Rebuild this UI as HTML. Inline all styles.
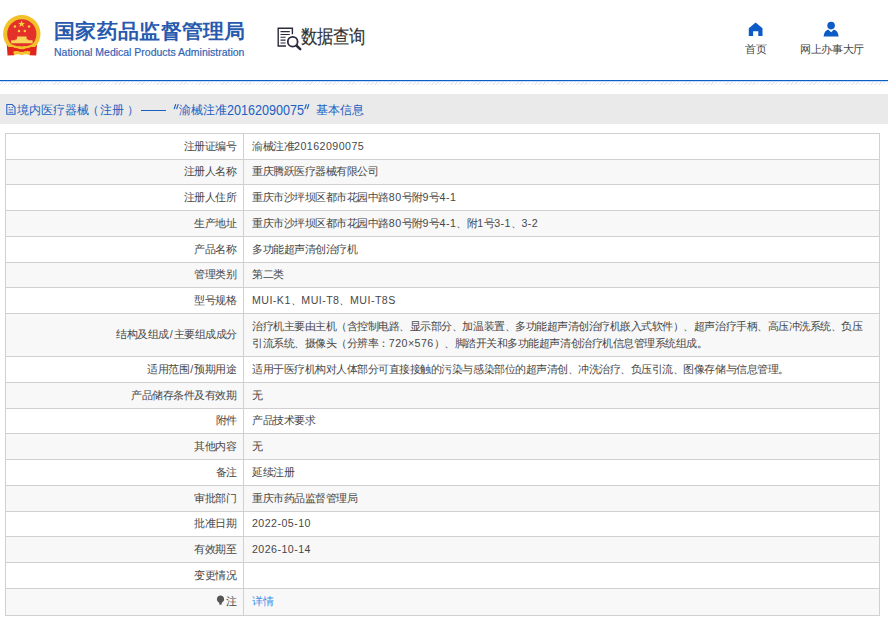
<!DOCTYPE html>
<html><head><meta charset="utf-8">
<style>
html,body{margin:0;padding:0;background:#fff;overflow:hidden;width:888px;height:618px;position:relative}
body{font-family:"Liberation Sans",sans-serif;}
.a{position:absolute}
.t{font-size:12px;line-height:16px;white-space:nowrap;color:#474747;transform:scale(0.888);transform-origin:0 0}
.tr{transform-origin:100% 0}
.hl{left:5px;width:875px;height:1px;background:#d1cfd1}
.vl{top:133px;width:1px;height:483px;background:#d1cfd1}
.tb{letter-spacing:-0.15px}
.lat{letter-spacing:0.5px}
.sl{letter-spacing:1.2px;padding-left:1px}
.bcc{font-size:13px;letter-spacing:0.5px;color:#1b5fc1!important}
</style></head><body>
<!-- emblem -->
<svg class="a" style="left:0;top:12px" width="44" height="46" viewBox="0 12 44 46">
  <defs><clipPath id="cp"><rect x="0" y="0" width="44" height="47"/></clipPath></defs>
  <path d="M6.8 44.5 L37 44.5 L36.2 55.6 L29.6 55.3 L27.6 52 H16 L14 55.3 L7.5 55.6 Z" fill="#e1251b"/>
  <circle cx="21.8" cy="33.8" r="18.7" fill="#f3c129" clip-path="url(#cp)"/>
  <circle cx="21.8" cy="33.9" r="14.6" fill="#e4302a"/>
  <path d="M21.6 20.6 L22.6 23.0 L25.0 23.0 L23.1 24.5 L23.8 26.9 L21.6 25.5 L19.4 26.9 L20.1 24.5 L18.2 23.0 L20.6 23.0 Z" fill="#f6cf40"/>
  <circle cx="14.9" cy="26.5" r="1.25" fill="#f6cf40"/><circle cx="29" cy="26.5" r="1.25" fill="#f6cf40"/>
  <circle cx="19" cy="31" r="1.25" fill="#f6cf40"/><circle cx="24.8" cy="31" r="1.25" fill="#f6cf40"/>
  <path d="M17 36.6 H26.6 V39.4 H17 Z M15.5 39.2 H28.2 V40.3 H15.5Z M11.2 40.3 H32.6 V43.3 H11.2 Z" fill="#f7d65c"/>
  <path d="M9 43.6 Q21.8 49.5 34.6 43.6 L35.6 45.6 Q21.8 52 8 45.6 Z" fill="#f3c129"/>
  <path d="M10.5 47 Q21.8 51.5 33.1 47 V52 H10.5 Z" fill="#e1251b"/>
  <path d="M17 47.3 Q19.5 45.3 21.8 47.5 Q24.1 45.3 26.6 47.3 Q24.5 50.1 21.8 49.1 Q19.1 50.1 17 47.3Z" fill="#f3c129"/>
  <path d="M13.2 51.4 Q17 50.2 21.8 52.4 Q26.6 50.2 30.4 51.4 L29.6 55 Q25 53.6 21.8 55.3 Q18.6 53.6 14 55 Z" fill="#f3c129"/>
</svg>
<div class="a t" id="title" style="left:54px;top:18px;font-size:24px;line-height:30px;font-weight:bold;color:#2759ae;transform:scale(0.888,0.85)">国家药品监督管理局</div>
<div class="a t" style="left:54px;top:45.8px;font-size:11.8px;line-height:14px;color:#2f62b4;transform:scale(0.888,0.88);-webkit-text-stroke:0.2px #2f62b4">National Medical Products Administration</div>
<!-- data query icon -->
<svg class="a" style="left:270px;top:20px" width="40" height="36" viewBox="270 20 40 36">
  <path d="M292.4 34.3 V28.2 H278.2 V46.0 H286" fill="none" stroke="#2b2b3c" stroke-width="1.4"/>
  <path d="M280.5 31.6H289.8M280.5 34.4H289.8M280.5 37.3H285.6M280.5 40.1H285.6M280.5 42.9H285.6" stroke="#2b2b3c" stroke-width="1.05" fill="none"/>
  <circle cx="292.7" cy="41.7" r="4.9" fill="none" stroke="#2b2b3c" stroke-width="1.8"/>
  <path d="M296.4 45.5 L300.2 49.1" stroke="#2b2b3c" stroke-width="2.5" stroke-linecap="round"/>
</svg>
<div class="a t" id="sq" style="left:301px;top:24px;font-size:18px;line-height:24px;color:#2e2e2e;-webkit-text-stroke:0.15px #2e2e2e;transform:scale(0.888,1.03)">数据查询</div>
<!-- home -->
<svg class="a" style="left:740px;top:18px" width="30" height="22" viewBox="740 18 30 22">
  <path d="M748.8 28.3 L755.65 22.5 L762.5 28.3 V35.9 H758.3 V31.2 H753.1 V35.9 H748.8 Z" fill="#0d5bc6"/>
</svg>
<div class="a t" id="shouye" style="left:744.5px;top:42px;color:#444">首页</div>
<!-- person -->
<svg class="a" style="left:815px;top:15px" width="30" height="25" viewBox="815 15 30 25">
  <circle cx="831.1" cy="25.6" r="3.8" fill="#0d5bc6"/>
  <path d="M823.6 36.6 Q824.2 30.8 828.2 29.6 L831.1 32.2 L834 29.6 Q838 30.8 838.6 36.6 Z" fill="#0d5bc6"/>
</svg>
<div class="a t" id="wang" style="left:800px;top:42px;color:#444">网上办事大厅</div>
<!-- blue line + stripes -->
<div class="a" style="left:0;top:80px;width:888px;height:1px;background:#0a5ec6"></div>
<div class="a" style="left:0;top:81px;width:888px;height:1px;background:#c9dcf3"></div>
<div class="a" style="left:0;top:82px;width:888px;height:3px;background:repeating-linear-gradient(135deg,#fff 0,#fff 1.7px,#e9e9e9 1.6px,#e9e9e9 2.7px)"></div>
<!-- breadcrumb -->
<div class="a" style="left:0;top:94px;width:888px;height:30px;background:#eaeaea"></div>
<svg class="a" style="left:0;top:100px" width="20" height="18" viewBox="0 100 20 18">
  <path d="M6.8 104.5 H12.2 L15 107.3 V114.3 H6.8 Z" fill="none" stroke="#2d62c6" stroke-width="1.1"/>
  <path d="M8.6 107.5H10.2M11.6 107.5H13.1M8.6 109.8H13.1M8.6 112.3H13.1" stroke="#4a72c8" stroke-width="1"/>
</svg>
<div class="a" id="bc" style="left:0;top:0;color:#1b5fc1">
  <div class="a t bcc" style="left:16.5px;top:102.5px">境内医疗器械</div>
  <div class="a t bcc" style="left:87px;top:102.5px">（</div>
  <div class="a t bcc" style="left:99.8px;top:102.5px">注册</div>
  <div class="a t bcc" style="left:127.3px;top:102.5px">）</div>
  <div class="a" style="left:140.8px;top:110px;width:25px;height:1px;background:#1b5fc1"></div>
  <svg class="a" style="left:170px;top:102px" width="12" height="10" viewBox="170 102 12 10"><path d="M175.6 104.6 L174.3 108.6 M178.1 104.6 L176.8 108.6" stroke="#1b5fc1" stroke-width="1.2" stroke-linecap="round"/></svg>
  <div class="a t bcc" style="left:178.5px;top:102.5px">渝械注准</div>
  <div class="a t" style="left:227px;top:102px;font-size:14.2px;line-height:16px;color:#1b5fc1;transform:scale(0.888,1)">20162090075</div>
  <svg class="a" style="left:302px;top:102px" width="10" height="10" viewBox="302 102 10 10"><path d="M306.2 104.6 L304.9 108.6 M308.7 104.6 L307.4 108.6" stroke="#1b5fc1" stroke-width="1.2" stroke-linecap="round"/></svg>
  <div class="a t bcc" style="left:316px;top:102.5px">基本信息</div>
</div>
<!-- table -->
<div class="a" style="left:5px;top:133px;width:874px;height:26px;background:#ffffff"></div>
<div class="a" style="left:5px;top:159px;width:874px;height:25px;background:#f8f8f8"></div>
<div class="a" style="left:5px;top:184px;width:874px;height:26px;background:#ffffff"></div>
<div class="a" style="left:5px;top:210px;width:874px;height:26px;background:#f8f8f8"></div>
<div class="a" style="left:5px;top:236px;width:874px;height:26px;background:#ffffff"></div>
<div class="a" style="left:5px;top:262px;width:874px;height:25px;background:#f8f8f8"></div>
<div class="a" style="left:5px;top:287px;width:874px;height:26px;background:#ffffff"></div>
<div class="a" style="left:5px;top:313px;width:874px;height:43px;background:#f8f8f8"></div>
<div class="a" style="left:5px;top:356px;width:874px;height:26px;background:#ffffff"></div>
<div class="a" style="left:5px;top:382px;width:874px;height:26px;background:#f8f8f8"></div>
<div class="a" style="left:5px;top:408px;width:874px;height:25px;background:#ffffff"></div>
<div class="a" style="left:5px;top:433px;width:874px;height:26px;background:#f8f8f8"></div>
<div class="a" style="left:5px;top:459px;width:874px;height:26px;background:#ffffff"></div>
<div class="a" style="left:5px;top:485px;width:874px;height:26px;background:#f8f8f8"></div>
<div class="a" style="left:5px;top:511px;width:874px;height:25px;background:#ffffff"></div>
<div class="a" style="left:5px;top:536px;width:874px;height:26px;background:#f8f8f8"></div>
<div class="a" style="left:5px;top:562px;width:874px;height:26px;background:#ffffff"></div>
<div class="a" style="left:5px;top:588px;width:874px;height:27px;background:#f8f8f8"></div>
<div class="a hl" style="top:133px"></div>
<div class="a hl" style="top:159px"></div>
<div class="a hl" style="top:184px"></div>
<div class="a hl" style="top:210px"></div>
<div class="a hl" style="top:236px"></div>
<div class="a hl" style="top:262px"></div>
<div class="a hl" style="top:287px"></div>
<div class="a hl" style="top:313px"></div>
<div class="a hl" style="top:356px"></div>
<div class="a hl" style="top:382px"></div>
<div class="a hl" style="top:408px"></div>
<div class="a hl" style="top:433px"></div>
<div class="a hl" style="top:459px"></div>
<div class="a hl" style="top:485px"></div>
<div class="a hl" style="top:511px"></div>
<div class="a hl" style="top:536px"></div>
<div class="a hl" style="top:562px"></div>
<div class="a hl" style="top:588px"></div>
<div class="a hl" style="top:615px"></div>
<div class="a vl" style="left:5px"></div>
<div class="a vl" style="left:243px"></div>
<div class="a vl" style="left:879px"></div>
<div class="a t tr tb" style="right:651.4px;top:138.70px">注册证编号</div>
<div class="a t tb" style="left:251.5px;top:138.70px">渝械注准<span class="lat">20162090075</span></div>
<div class="a t tr tb" style="right:651.4px;top:164.20px">注册人名称</div>
<div class="a t tb" style="left:251.5px;top:164.20px">重庆腾跃医疗器械有限公司</div>
<div class="a t tr tb" style="right:651.4px;top:189.70px">注册人住所</div>
<div class="a t tb" style="left:251.5px;top:189.70px">重庆市沙坪坝区都市花园中路<span class="lat">80</span>号附<span class="lat">9</span>号<span class="lat">4-1</span></div>
<div class="a t tr tb" style="right:651.4px;top:215.70px">生产地址</div>
<div class="a t tb" style="left:251.5px;top:215.70px">重庆市沙坪坝区都市花园中路<span class="lat">80</span>号附<span class="lat">9</span>号<span class="lat">4-1</span>、附<span class="lat">1</span>号<span class="lat">3-1</span>、<span class="lat">3-2</span></div>
<div class="a t tr tb" style="right:651.4px;top:241.70px">产品名称</div>
<div class="a t tb" style="left:251.5px;top:241.70px">多功能超声清创治疗机</div>
<div class="a t tr tb" style="right:651.4px;top:267.20px">管理类别</div>
<div class="a t tb" style="left:251.5px;top:267.20px">第二类</div>
<div class="a t tr tb" style="right:651.4px;top:292.70px">型号规格</div>
<div class="a t tb" style="left:251.5px;top:292.70px"><span class="lat">MUI-K1</span>、<span class="lat">MUI-T8</span>、<span class="lat">MUI-T8S</span></div>
<div class="a t tr tb" style="right:651.4px;top:327.20px">结构及组成<span class="sl">/</span>主要组成成分</div>
<div class="a t tb" style="left:251.5px;top:318.90px">治疗机主要由主机（含控制电路、显示部分、加温装置、多功能超声清创治疗机嵌入式软件）、超声治疗手柄、高压冲洗系统、负压</div>
<div class="a t tb" style="left:251.5px;top:335.80px">引流系统、摄像头（分辨率：<span class="lat">720×576</span>）、脚踏开关和多功能超声清创治疗机信息管理系统组成。</div>
<div class="a t tr tb" style="right:651.4px;top:361.70px">适用范围<span class="sl">/</span>预期用途</div>
<div class="a t tb" style="left:251.5px;top:361.70px">适用于医疗机构对人体部分可直接接触的污染与感染部位的超声清创、冲洗治疗、负压引流、图像存储与信息管理。</div>
<div class="a t tr tb" style="right:651.4px;top:387.70px">产品储存条件及有效期</div>
<div class="a t tb" style="left:251.5px;top:387.70px">无</div>
<div class="a t tr tb" style="right:651.4px;top:413.20px">附件</div>
<div class="a t tb" style="left:251.5px;top:413.20px">产品技术要求</div>
<div class="a t tr tb" style="right:651.4px;top:438.70px">其他内容</div>
<div class="a t tb" style="left:251.5px;top:438.70px">无</div>
<div class="a t tr tb" style="right:651.4px;top:464.70px">备注</div>
<div class="a t tb" style="left:251.5px;top:464.70px">延续注册</div>
<div class="a t tr tb" style="right:651.4px;top:490.70px">审批部门</div>
<div class="a t tb" style="left:251.5px;top:490.70px">重庆市药品监督管理局</div>
<div class="a t tr tb" style="right:651.4px;top:516.20px">批准日期</div>
<div class="a t tb" style="left:251.5px;top:516.20px"><span class="lat">2022-05-10</span></div>
<div class="a t tr tb" style="right:651.4px;top:541.70px">有效期至</div>
<div class="a t tb" style="left:251.5px;top:541.70px"><span class="lat">2026-10-14</span></div>
<div class="a t tr tb" style="right:651.4px;top:567.70px">变更情况</div>
<div class="a t tr tb" style="right:651.4px;top:594.20px"><svg width="9" height="12" viewBox="0 0 9 12" style="vertical-align:-1px;margin-right:1.5px"><path d="M4.5 0.8C6.8 0.8 8.6 2.6 8.6 4.9 8.6 6.6 7.4 7.8 6 8.8 L5.6 11 H3.4 L3 8.8 C1.6 7.8 0.4 6.6 0.4 4.9 0.4 2.6 2.2 0.8 4.5 0.8Z" fill="#555"/></svg>注</div>
<div class="a t tb" style="left:251.5px;top:594.20px"><span style="color:#3d8ee8">详情</span></div>
</body></html>
